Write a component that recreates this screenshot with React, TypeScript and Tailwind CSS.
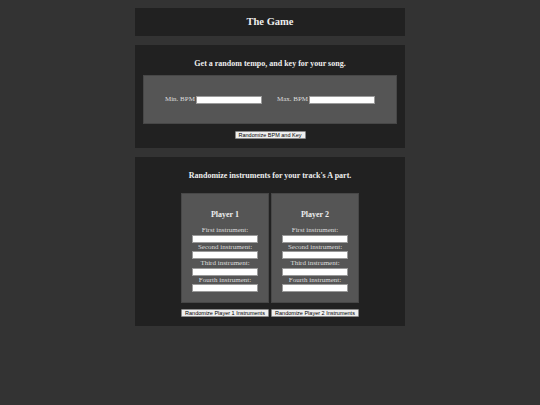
import React from 'react';

const serif = { fontFamily: '"Liberation Serif", "Times New Roman", serif' };

const Btn: React.FC<{ label: string; w?: string }> = ({ label, w = '' }) => (
  <button
    className={`h-[8px] bg-[#efefef] border border-[#8a8a8a] rounded-[1px] px-[2px] text-[5.5px] leading-[6px] text-black flex items-center justify-center ${w}`}
    style={{ fontFamily: '"Liberation Sans", Arial, sans-serif' }}
  >
    {label}
  </button>
);

const Field: React.FC<{ className?: string }> = ({ className = '' }) => (
  <input type="text" className={`h-[8px] w-[66px] bg-white border border-[#9a9a9a] outline-none ${className}`} />
);

const PlayerBox: React.FC<{ n: number }> = ({ n }) => {
  const slots = ['First', 'Second', 'Third', 'Fourth'];
  return (
    <div className="w-[88px] h-[110px] bg-[#555555] border border-[#474747] flex flex-col items-center pt-[16px]">
      <h3 className="text-[8px] leading-[10px] font-bold text-[#eeeeee] mb-[6px]">Player {n}</h3>
      {slots.map(s => (
        <div key={s} className="flex flex-col items-center">
          <span className="text-[7px] leading-[8.5px] text-[#dddddd] whitespace-nowrap">{s} instrument:</span>
          <Field />
        </div>
      ))}
    </div>
  );
};

export default function App() {
  return (
    <div className="min-h-screen bg-[#333333] pt-[8px]" style={serif}>
      <div className="w-[270px] mx-auto flex flex-col gap-[9px]">
        {/* header */}
        <div className="h-[28px] bg-[#212121] flex items-center justify-center">
          <h1 className="text-[10.5px] font-bold text-[#eeeeee]">The Game</h1>
        </div>

        {/* tempo + key */}
        <div className="bg-[#212121] pt-[15px] pb-[9px] flex flex-col items-center">
          <h2 className="text-[8px] leading-[8px] font-bold text-[#eeeeee] mb-[7px]">
            Get a random tempo, and key for your song.
          </h2>
          <div className="w-[254px] h-[49px] bg-[#555555] border border-[#474747] flex items-center justify-center gap-[15px]">
            <label className="flex items-center gap-[1px] text-[7px] text-[#dddddd]">
              Min. BPM <Field />
            </label>
            <label className="flex items-center gap-[1px] text-[7px] text-[#dddddd]">
              Max. BPM <Field />
            </label>
          </div>
          <div className="mt-[7px]">
            <Btn label="Randomize BPM and Key" w="w-[71px]" />
          </div>
        </div>

        {/* instruments */}
        <div className="bg-[#212121] pt-[15px] pb-[9px] flex flex-col items-center">
          <h2 className="text-[8px] leading-[8px] font-bold text-[#eeeeee] mb-[13px]">
            Randomize instruments for your track's A part.
          </h2>
          <div className="flex gap-[2px]">
            <PlayerBox n={1} />
            <PlayerBox n={2} />
          </div>
          <div className="flex gap-[2px] mt-[6px]">
            <Btn label="Randomize Player 1 Instruments" w="w-[88px]" />
            <Btn label="Randomize Player 2 Instruments" w="w-[88px]" />
          </div>
        </div>
      </div>
    </div>
  );
}
